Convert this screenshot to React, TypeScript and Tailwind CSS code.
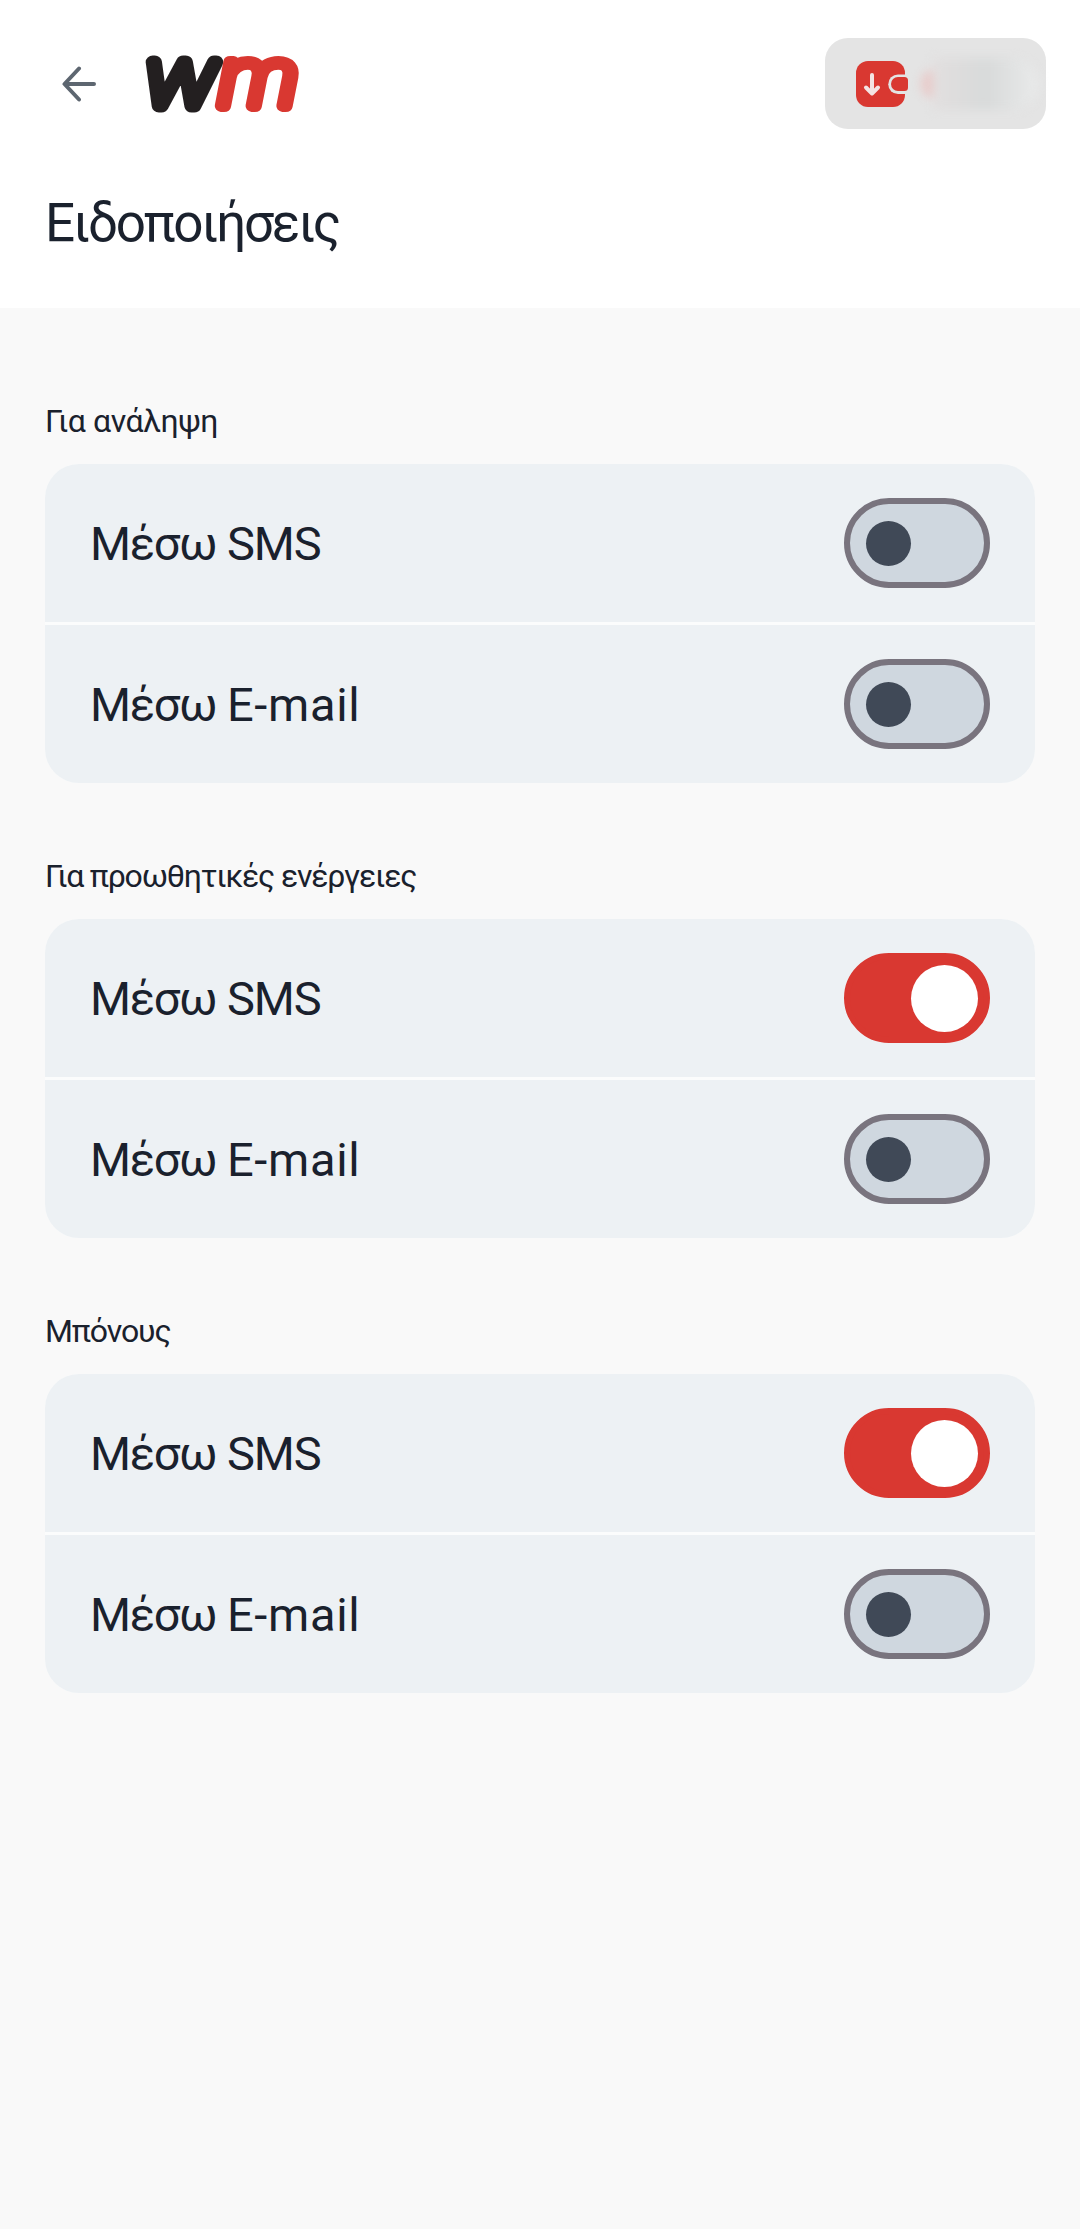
import { useState } from 'react';

type Channel = { id: string; name: string; nameClass: string; enabled: boolean };
type Group = { id: string; title: string; titleClass: string; channels: Channel[] };

const sms = { id: 'sms', name: 'SMS', nameClass: 'tracking-[-1px]' };
const email = { id: 'email', name: 'E-mail', nameClass: 'tracking-[0.7px]' };

const initialGroups: Group[] = [
  {
    id: 'withdrawal',
    title: 'Για ανάληψη',
    titleClass: 'tracking-[-0.4px]',
    channels: [
      { ...sms, enabled: false },
      { ...email, enabled: false },
    ],
  },
  {
    id: 'promo',
    title: 'Για προωθητικές ενέργειες',
    titleClass: 'tracking-[-1.2px]',
    channels: [
      { ...sms, enabled: true },
      { ...email, enabled: false },
    ],
  },
  {
    id: 'bonus',
    title: 'Μπόνους',
    titleClass: 'tracking-[-1.1px]',
    channels: [
      { ...sms, enabled: true },
      { ...email, enabled: false },
    ],
  },
];

function BackIcon() {
  return (
    <svg width="34" height="36" viewBox="0 0 34 36" fill="none" stroke="#5d6670" strokeWidth="4" strokeLinecap="round" strokeLinejoin="round">
      <path d="M17 2.5 2.5 18 17 33.5M3 18h29" />
    </svg>
  );
}

function Logo() {
  return (
    <svg
      width="170"
      height="120"
      viewBox="0 0 170 120"
      className="font-[Inter] text-[80px] font-thin italic"
      strokeLinejoin="round"
      strokeWidth="13"
    >
      <text x="3" y="81.500" textLength="71" lengthAdjust="spacingAndGlyphs" fill="#231f20" stroke="#231f20">w</text>
      <text x="75" y="81.500" textLength="82" lengthAdjust="spacingAndGlyphs" fill="#d93831" stroke="#d93831" strokeWidth="12">m</text>
    </svg>
  );
}

function WalletIcon() {
  return (
    <svg width="53" height="46" viewBox="0 0 53 46" fill="none">
      <rect width="49" height="46" rx="12" fill="#d93831" />
      <path d="M53 13.500H42a9.500 9.500 0 0 0 0 19.500h11z" fill="#e4e4e4" />
      <path d="M42 16h6.500a3.500 3.500 0 0 1 3.500 3.500v7a3.500 3.500 0 0 1-3.500 3.500H42a7 7 0 0 1 0-14z" fill="#d93831" />
      <path d="M16 14v18M10 26.500l6 6 6-6" stroke="#f4e4e3" strokeWidth="4" strokeLinecap="round" strokeLinejoin="round" />
    </svg>
  );
}

function Toggle({ on, label, onChange }: { on: boolean; label: string; onChange: () => void }) {
  return (
    <button
      type="button"
      role="switch"
      aria-checked={on}
      aria-label={label}
      onClick={onChange}
      className={`flex h-[90px] w-[146px] items-center rounded-full border-[6px] ${
        on ? 'justify-end border-[#d93831] bg-[#d93831] pr-1.5' : 'border-[#79747e] bg-[#cfd7df] pl-4'
      }`}
    >
      <span className={on ? 'size-[67px] rounded-full bg-white' : 'size-[45px] rounded-full bg-[#404957]'} />
    </button>
  );
}

export default function App() {
  const [groups, setGroups] = useState(initialGroups);

  const toggleChannel = (groupId: string, channelId: string) => {
    setGroups((prev) =>
      prev.map((g) =>
        g.id !== groupId
          ? g
          : { ...g, channels: g.channels.map((c) => (c.id === channelId ? { ...c, enabled: !c.enabled } : c)) }
      )
    );
  };

  return (
    <div className="min-h-screen bg-[#f9f9f9] font-[Roboto,sans-serif] text-[#1a212d]">
      {/* Header */}
      <header className="h-[308px] bg-white pt-[38px]">
        <div className="flex h-[91px] items-center pr-[34px] pl-[62px]">
          <button type="button" aria-label="Πίσω">
            <BackIcon />
          </button>
          <div className="ml-[46px]">
            <Logo />
          </div>
          {/* Wallet with the blurred balance */}
          <div className="ml-auto flex h-[91px] w-[221px] items-center rounded-[23px] bg-[#e4e4e4] pl-[31px]">
            <WalletIcon />
            <div className="ml-3 flex h-14 items-center blur-[5px]">
              <div className="h-7 w-3 rounded-l-full bg-[#e8cbca]" />
              <div className="h-[52px] w-[106px] rounded-l-xl rounded-r-full bg-linear-to-r from-[#e2dfdf] via-[#d8dada] to-[#e9eaea]" />
            </div>
          </div>
        </div>
        <h1 className="mt-[62px] pl-[45px] text-[53px] leading-[64px] tracking-[-2.2px]">Ειδοποιήσεις</h1>
      </header>

      {/* Notification groups */}
      <main className="flex flex-col gap-[72px] px-[45px] pt-[92px]">
        {groups.map((group) => (
          <section key={group.id}>
            <h2 className={`mb-[23px] pt-px text-[32px] leading-10 ${group.titleClass}`}>{group.title}</h2>
            <div className="flex flex-col gap-[3px] overflow-hidden rounded-[34px] bg-[#fbfcfc]">
              {group.channels.map((channel) => (
                <div key={channel.id} className="flex h-[158px] items-center justify-between bg-[#edf1f4] px-[45px]">
                  <span className="pt-0.5 text-[47px]">
                    <span className="tracking-[-1.3px]">Μέσω </span>
                    <span className={channel.nameClass}>{channel.name}</span>
                  </span>
                  <Toggle
                    on={channel.enabled}
                    label={`${group.title} – ${channel.name}`}
                    onChange={() => toggleChannel(group.id, channel.id)}
                  />
                </div>
              ))}
            </div>
          </section>
        ))}
      </main>
    </div>
  );
}
